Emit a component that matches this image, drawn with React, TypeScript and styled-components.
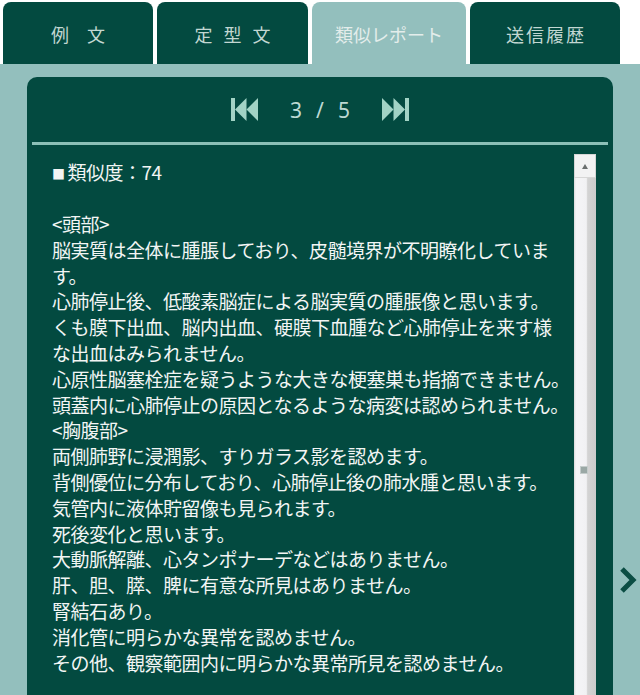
import React from "react";
import styled, { createGlobalStyle } from "styled-components";

const DARK = "#034a40";
const LIGHT = "#93bfbd";
const MINT = "#a2d3c5";

const GlobalStyle = createGlobalStyle`
  html, body { margin: 0; padding: 0; background: #ffffff; }
  body { font-family: "Noto Sans CJK JP", "Noto Sans", sans-serif; }
  * { box-sizing: border-box; }
`;

const Screen = styled.div`
  width: 640px;
  height: 695px;
  overflow: hidden;
  display: flex;
  flex-direction: column;
  background: #ffffff;
`;

const TabBar = styled.div`
  flex: none;
  height: 64px;
  display: flex;
  align-items: stretch;
  gap: 4px;
  padding: 2px 0 0 3px;
`;

const Tab = styled.div<{ $active?: boolean; $w: number }>`
  flex: none;
  width: ${(p) => p.$w}px;
  display: flex;
  align-items: center;
  justify-content: center;
  border-radius: 8px 8px 0 0;
  background: ${(p) => (p.$active ? LIGHT : DARK)};
  color: ${(p) => (p.$active ? "#e3edeb" : "#c2d7d2")};
  font-size: 18px;
  line-height: 1;
  padding-top: 1px;
`;

const TabLabel = styled.span<{ $spacing: number }>`
  letter-spacing: ${(p) => p.$spacing}px;
  padding-left: ${(p) => p.$spacing}px;
  white-space: nowrap;
`;

const Body = styled.div`
  flex: 1;
  min-height: 0;
  display: flex;
  background: ${LIGHT};
  padding: 13px 0 0 27px;
`;

const Panel = styled.section`
  flex: none;
  width: 586px;
  display: flex;
  flex-direction: column;
  background: ${DARK};
  border-radius: 10px 10px 0 0;
`;

const Side = styled.div`
  flex: 1;
  display: flex;
  justify-content: center;
  align-items: flex-start;
  padding-top: 489px;
`;

const NavRow = styled.div`
  flex: none;
  height: 65px;
  display: flex;
  align-items: center;
  justify-content: center;
  gap: 32px;
  padding-top: 2px;
`;

const NavButton = styled.button`
  border: 0;
  background: none;
  padding: 0;
  display: flex;
  cursor: pointer;
  margin-top: -3px;
`;

const PageText = styled.div`
  display: flex;
  gap: 14px;
  font-family: "Noto Sans", "DejaVu Sans", sans-serif;
  font-size: 21px;
  line-height: 1;
  color: #bcd9d3;
`;

const Separator = styled.div`
  flex: none;
  height: 3px;
  margin: 0 5px;
  background: #8cc0b7;
`;

const Content = styled.div`
  flex: 1;
  min-height: 0;
  display: flex;
  align-items: stretch;
  padding: 9px 17px 0 25px;
  overflow: hidden;
`;

const TextBlock = styled.div`
  flex: 1;
  min-width: 0;
  padding-top: 5px;
  color: #f2f5f4;
  font-size: 19px;
  line-height: 26px;
  letter-spacing: -0.5px;
`;

const Header = styled.div`
  white-space: nowrap;
  margin-bottom: 24px;
`;

const Square = styled.span`
  font-size: 13px;
  margin-right: 3px;
  vertical-align: 1px;
`;

const Line = styled.div`
  white-space: nowrap;
  line-height: 25.8px;
`;

const Scrollbar = styled.div`
  flex: none;
  width: 22px;
  display: flex;
  flex-direction: column;
`;

const ScrollUp = styled.div`
  flex: none;
  height: 24px;
  background: #f2f2f3;
  border: 1px solid #d6d6d6;
  display: flex;
  align-items: center;
  justify-content: center;
`;

const Thumb = styled.div`
  flex: 1;
  display: flex;
  justify-content: center;
  padding-top: 288px;
  padding-right: 3px;
  background: linear-gradient(
    to right,
    #d9d9d9 0,
    #f5f5f7 2px,
    #f1f1f3 56%,
    #d3d3d3 62%,
    #cbcbcb 100%
  );
`;

const Grip = styled.div`
  width: 8px;
  height: 8px;
  background: #9aa8a5;
  border: 1px solid #c4cccb;
`;

const SkipIcon: React.FC<{ dir: "first" | "last" }> = ({ dir }) => (
  <svg
    width="27"
    height="23"
    viewBox="0 0 27 23"
    style={dir === "last" ? { transform: "scaleX(-1)" } : undefined}
  >
    <rect x="0" y="0" width="4" height="23" fill={MINT} />
    <polygon points="4,11.5 15.5,0 15.5,23" fill={MINT} />
    <polygon points="15.5,11.5 27,0 27,23" fill={MINT} />
  </svg>
);

const Chevron = () => (
  <svg width="20" height="28" viewBox="0 0 20 28">
    <polyline
      points="5,3 16,14 5,25"
      fill="none"
      stroke="#0b4d44"
      strokeWidth="5"
      strokeLinejoin="miter"
    />
  </svg>
);

const UpArrow = () => (
  <svg width="8" height="6" viewBox="0 0 8 6">
    <polygon points="1,6 7,6 4,1" fill="#6a6f6f" />
  </svg>
);

const tabs = [
  { label: "例文", w: 150, spacing: 18 },
  { label: "定型文", w: 151, spacing: 11 },
  { label: "類似レポート", w: 154, spacing: 0, active: true },
  { label: "送信履歴", w: 150, spacing: 2 },
];

const lines = [
  "<頭部>",
  "脳実質は全体に腫脹しており、皮髄境界が不明瞭化していま",
  "す。",
  "心肺停止後、低酸素脳症による脳実質の腫脹像と思います。",
  "くも膜下出血、脳内出血、硬膜下血腫など心肺停止を来す様",
  "な出血はみられません。",
  "心原性脳塞栓症を疑うような大きな梗塞巣も指摘できません。",
  "頭蓋内に心肺停止の原因となるような病変は認められません。",
  "<胸腹部>",
  "両側肺野に浸潤影、すりガラス影を認めます。",
  "背側優位に分布しており、心肺停止後の肺水腫と思います。",
  "気管内に液体貯留像も見られます。",
  "死後変化と思います。",
  "大動脈解離、心タンポナーデなどはありません。",
  "肝、胆、膵、脾に有意な所見はありません。",
  "腎結石あり。",
  "消化管に明らかな異常を認めません。",
  "その他、観察範囲内に明らかな異常所見を認めません。",
];

export default function App() {
  return (
    <>
      <GlobalStyle />
      <Screen>
        <TabBar>
          {tabs.map((t) => (
            <Tab key={t.label} $w={t.w} $active={t.active}>
              <TabLabel $spacing={t.spacing}>{t.label}</TabLabel>
            </Tab>
          ))}
        </TabBar>
        <Body>
          <Panel>
            <NavRow>
              <NavButton aria-label="first">
                <SkipIcon dir="first" />
              </NavButton>
              <PageText>
                <span>3</span>
                <span>/</span>
                <span>5</span>
              </PageText>
              <NavButton aria-label="last">
                <SkipIcon dir="last" />
              </NavButton>
            </NavRow>
            <Separator />
            <Content>
              <TextBlock>
                <Header>
                  <Square>■</Square>類似度：74
                </Header>
                {lines.map((l, i) => (
                  <Line key={i}>{l}</Line>
                ))}
              </TextBlock>
              <Scrollbar>
                <ScrollUp>
                  <UpArrow />
                </ScrollUp>
                <Thumb>
                  <Grip />
                </Thumb>
              </Scrollbar>
            </Content>
          </Panel>
          <Side>
            <Chevron />
          </Side>
        </Body>
      </Screen>
    </>
  );
}
